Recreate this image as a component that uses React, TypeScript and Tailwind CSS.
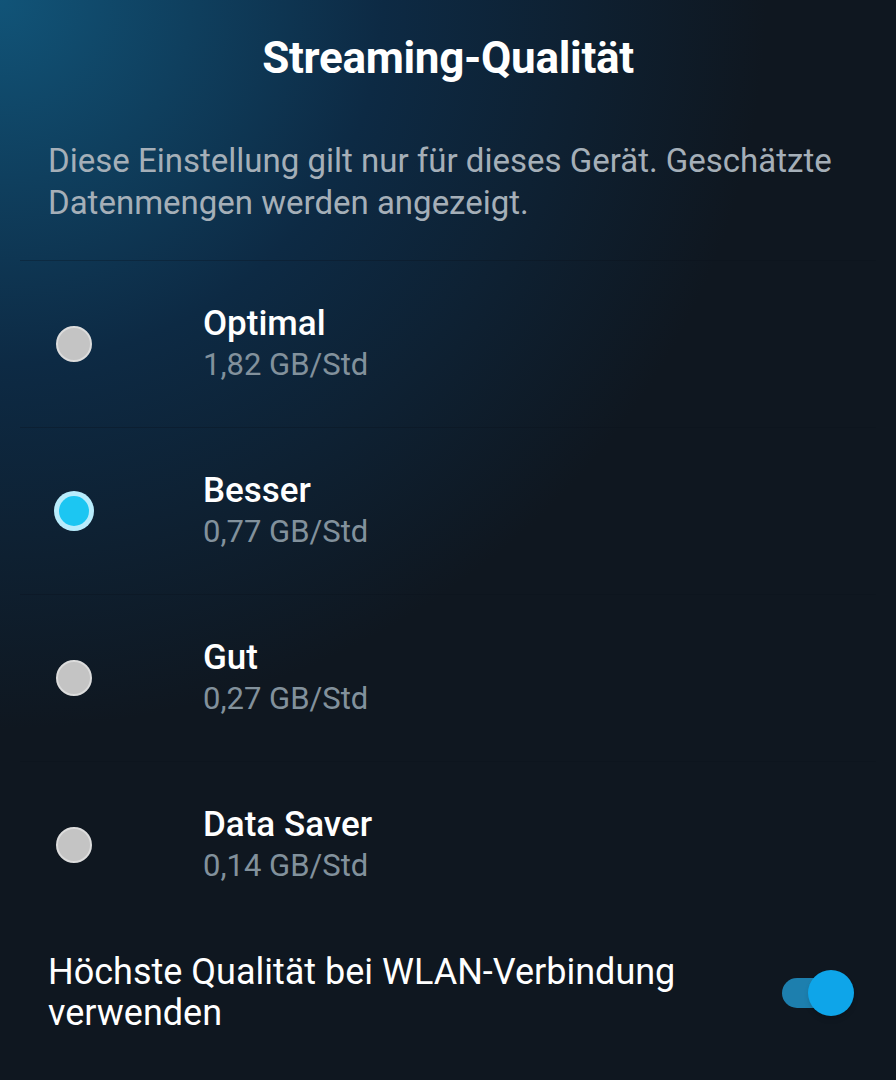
import { useState } from "react";

const options = [
    { id: "optimal", label: "Optimal", usage: "1,82 GB/Std" },
    { id: "besser", label: "Besser", usage: "0,77 GB/Std" },
    { id: "gut", label: "Gut", usage: "0,27 GB/Std" },
    { id: "saver", label: "Data Saver", usage: "0,14 GB/Std" },
];

export default function App() {
    const [selected, setSelected] = useState("besser");
    const [wifiBest, setWifiBest] = useState(true);

    return (
        <main
            className="relative h-[1080px] w-full overflow-hidden bg-[#0f1720] text-white"
            style={{ fontFamily: "Roboto, 'Noto Sans', sans-serif" }}
        >
            {/* Blue glow in the top-left corner */}
            <div className="pointer-events-none absolute inset-0 bg-[radial-gradient(ellipse_95%_75%_at_0%_0%,_#115478_0%,_#0d2a44_45%,_#0f1720_90%)]" />

            <div className="relative flex flex-col">
                {/* Header */}
                <h1 className="pt-[34px] text-center text-[44px] font-bold leading-[48px] tracking-[-0.3px]">
                    Streaming-Qualität
                </h1>

                <p className="mt-[58px] px-12 text-[33px] leading-[42px] text-[#a5afb8]">
                    Diese Einstellung gilt nur für dieses Gerät. Geschätzte Datenmengen werden angezeigt.
                </p>

                {/* Options */}
                <div className="mt-[36px]">
                    {options.map((opt) => {
                        const active = opt.id === selected;
                        return (
                            <button
                                key={opt.id}
                                onClick={() => setSelected(opt.id)}
                                className="mx-5 flex h-[167px] w-[calc(100%-40px)] items-center border-t border-[#0a121a]/30 text-left"
                            >
                                <div className="flex w-[183px] items-center pl-[34px]">
                                    {active ? (
                                        <span className="flex h-10 w-10 items-center justify-center rounded-full bg-[#b8ecfc]">
                                            <span className="h-[30px] w-[30px] rounded-full bg-[#1cc6f2]" />
                                        </span>
                                    ) : (
                                        <span className="ml-[2px] h-9 w-9 rounded-full border-2 border-[#dcdcdc] bg-[#c4c4c4]" />
                                    )}
                                </div>
                                <div className="flex flex-col">
                                    <span className="text-[35px] font-medium leading-[41px]">{opt.label}</span>
                                    <span className="text-[31px] leading-[41px] text-[#82919c]">{opt.usage}</span>
                                </div>
                            </button>
                        );
                    })}
                </div>

                {/* WLAN toggle */}
                <div className="flex items-center justify-between pl-12 pr-[42px] pt-[24px]">
                    <p className="max-w-[690px] text-[36px] leading-[41px]">
                        Höchste Qualität bei WLAN-Verbindung verwenden
                    </p>
                    <button
                        onClick={() => setWifiBest(!wifiBest)}
                        className="relative h-[46px] w-[72px]"
                    >
                        <span className={`absolute left-0 top-1/2 h-[30px] w-[60px] -translate-y-1/2 rounded-full ${wifiBest ? "bg-[#1d7fae]" : "bg-[#5a6470]"}`} />
                        <span
                            className={`absolute top-0 h-[46px] w-[46px] rounded-full shadow-md ${wifiBest ? "right-0 bg-[#0ea5e9]" : "left-0 bg-[#d0d0d0]"}`}
                        />
                    </button>
                </div>
            </div>
        </main>
    );
}
